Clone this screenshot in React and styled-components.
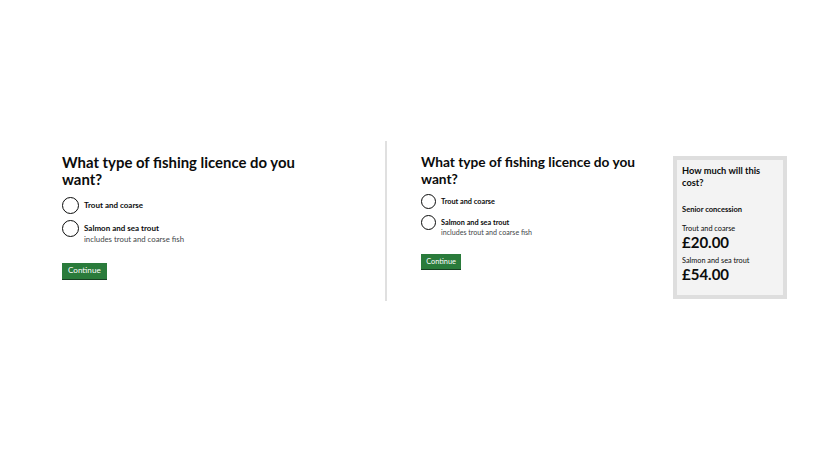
import React from "react";
import styled, { createGlobalStyle } from "styled-components";

const Global = createGlobalStyle`
  html, body { margin: 0; padding: 0; background: #ffffff; }
  body { font-family: Lato, "Liberation Sans", Arial, sans-serif; color: #0b0c0c; }
  * { box-sizing: border-box; }
`;

const Page = styled.div`
  width: 825px;
  height: 450px;
  display: flex;
  align-items: flex-start;
  padding: 141px 38px 0 62px;
`;

const LeftPanel = styled.section`
  width: 323px;
  padding-top: 13px;
`;

const RightPanel = styled.section`
  flex: 1;
  height: 160px;
  border-left: 2px solid #e0e0e0;
  padding-left: 34px;
  display: flex;
  align-items: flex-start;
`;

const Main = styled.div`
  width: 252px;
  padding-top: 13px;
`;

const Heading = styled.h1`
  margin: 0 0 ${(p) => (p.$small ? "7.4px" : "9px")};
  font-size: ${(p) => (p.$small ? "13.7px" : "14.9px")};
  line-height: ${(p) => (p.$small ? "16.5px" : "17px")};
  font-weight: 700;
  max-width: ${(p) => (p.$small ? "240px" : "260px")};
  color: #0b0c0c;
`;

const RadioItem = styled.div`
  display: flex;
  align-items: flex-start;
  gap: 5px;
  margin-bottom: ${(p) => p.$gap}px;
`;

const Circle = styled.span`
  flex-shrink: 0;
  width: ${(p) => p.$size}px;
  height: ${(p) => p.$size}px;
  border: 1.5px solid #0b0c0c;
  border-radius: 50%;
  background: #fff;
`;

const LabelBlock = styled.div`
  display: flex;
  flex-direction: column;
`;

const Label = styled.span`
  font-weight: 700;
  font-size: ${(p) => (p.$small ? "7.3px" : "8px")};
  line-height: ${(p) => p.$size}px;
  white-space: nowrap;
`;

const Hint = styled.span`
  font-size: ${(p) => (p.$small ? "7.1px" : "7.8px")};
  line-height: ${(p) => (p.$small ? "9px" : "10px")};
  margin-top: ${(p) => (p.$small ? "-2.5px" : "-3px")};
  color: #3f4649;
  white-space: nowrap;
`;

const Button = styled.button`
  display: inline-flex;
  align-items: center;
  justify-content: center;
  margin-top: ${(p) => (p.$small ? "17.5px" : "18.5px")};
  height: ${(p) => (p.$small ? "15px" : "16px")};
  padding: 0 ${(p) => (p.$small ? "5.2px" : "6px")};
  border: 0;
  border-radius: 0;
  background: #2a7b3b;
  box-shadow: 0 1px 0 #173f22;
  color: #ffffff;
  font-family: Lato, "Liberation Sans", Arial, sans-serif;
  font-size: ${(p) => (p.$small ? "7.4px" : "8.1px")};
  line-height: 1;
  cursor: pointer;
`;

const Aside = styled.aside`
  width: 114px;
  margin-top: 15px;
  border: 4px solid #dedede;
  background: #f3f3f3;
  padding: 5.3px 5px 13px 5px;
`;

const AsideTitle = styled.h2`
  margin: 0;
  font-size: 9.25px;
  line-height: 12px;
  font-weight: 700;
`;

const AsideSub = styled.h3`
  margin: 16px 0 8.5px;
  font-size: 7.55px;
  line-height: 10px;
  font-weight: 700;
`;

const PriceGroup = styled.div`
  display: flex;
  flex-direction: column;
  & + & { margin-top: 6px; }
`;

const PriceLabel = styled.span`
  font-size: 7.3px;
  line-height: 10px;
  white-space: nowrap;
`;

const Price = styled.span`
  font-size: 15px;
  line-height: 16px;
  font-weight: 700;
`;

function Question({ small }) {
  const size = small ? 15 : 17;
  return (
    <>
      <Heading $small={small}>What type of fishing licence do you want?</Heading>
      <RadioItem $gap={6}>
        <Circle $size={size} />
        <LabelBlock>
          <Label $small={small} $size={size}>Trout and coarse</Label>
        </LabelBlock>
      </RadioItem>
      <RadioItem $gap={0}>
        <Circle $size={size} />
        <LabelBlock>
          <Label $small={small} $size={size}>Salmon and sea trout</Label>
          <Hint $small={small}>includes trout and coarse fish</Hint>
        </LabelBlock>
      </RadioItem>
      <Button $small={small}>Continue</Button>
    </>
  );
}

export default function App() {
  return (
    <>
      <Global />
      <Page>
        <LeftPanel>
          <Question />
        </LeftPanel>
        <RightPanel>
          <Main>
            <Question small />
          </Main>
          <Aside>
            <AsideTitle>How much will this cost?</AsideTitle>
            <AsideSub>Senior concession</AsideSub>
            <PriceGroup>
              <PriceLabel>Trout and coarse</PriceLabel>
              <Price>£20.00</Price>
            </PriceGroup>
            <PriceGroup>
              <PriceLabel>Salmon and sea trout</PriceLabel>
              <Price>£54.00</Price>
            </PriceGroup>
          </Aside>
        </RightPanel>
      </Page>
    </>
  );
}
